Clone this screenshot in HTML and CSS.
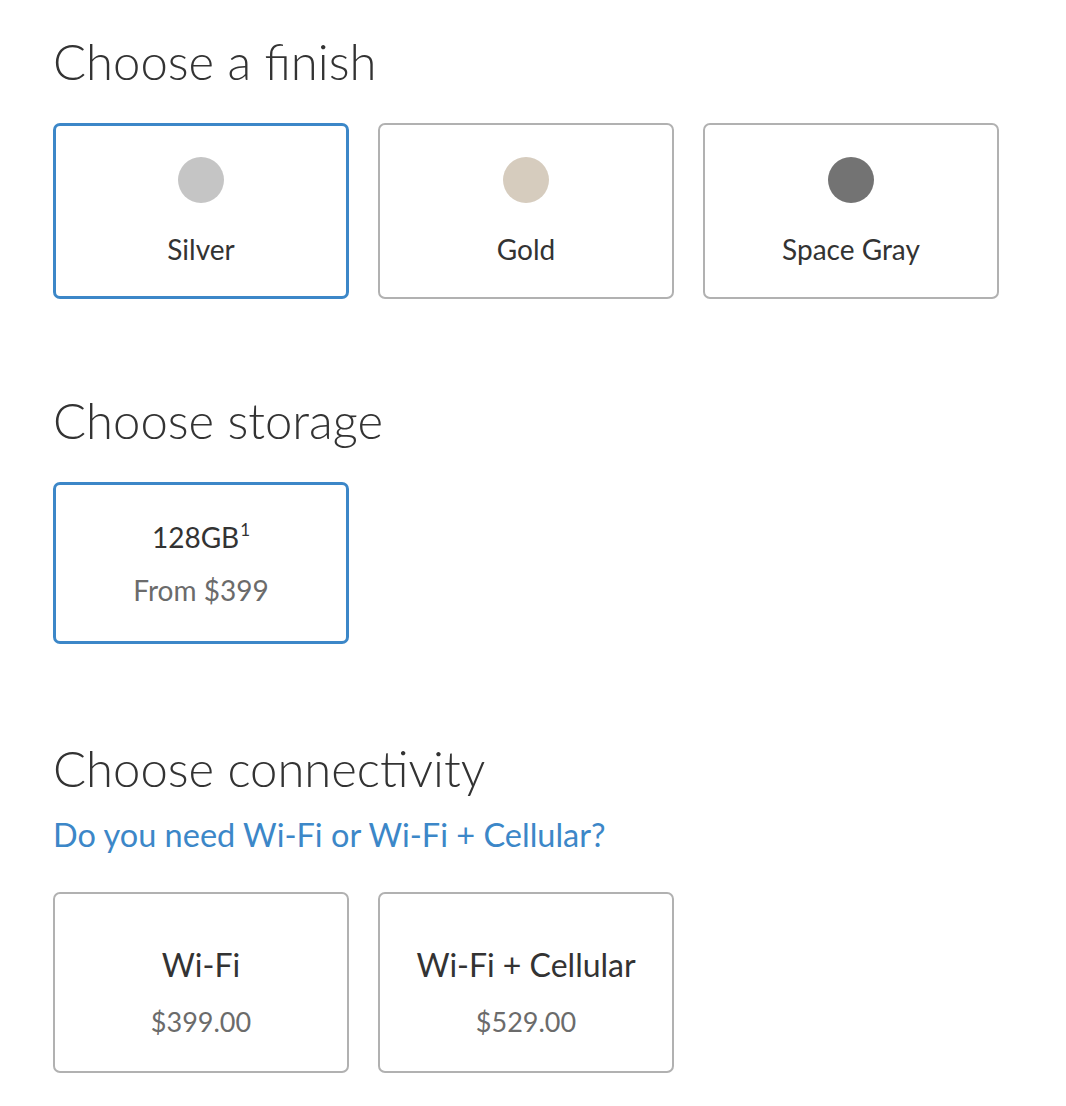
FILE: index.html
```html
<!DOCTYPE html>
<html lang="en">
<head>
  <meta charset="UTF-8">
  <title>Choose your iPad</title>
  <link rel="stylesheet" href="styles.css">
</head>
<body>
  <div class="config">
    <section class="step step-finish">
      <h2>Choose a finish</h2>
      <div class="options">
        <div class="option selected">
          <span class="swatch silver"></span>
          <span class="name">Silver</span>
        </div>
        <div class="option">
          <span class="swatch gold"></span>
          <span class="name">Gold</span>
        </div>
        <div class="option">
          <span class="swatch space-gray"></span>
          <span class="name">Space Gray</span>
        </div>
      </div>
    </section>

    <section class="step step-storage">
      <h2>Choose storage</h2>
      <div class="options">
        <div class="option option-storage selected">
          <span class="capacity">128GB<sup>1</sup></span>
          <span class="price">From $399</span>
        </div>
      </div>
    </section>

    <section class="step step-connectivity">
      <h2>Choose connectivity</h2>
      <a class="help-link" href="#">Do you need Wi-Fi or Wi-Fi + Cellular?</a>
      <div class="options">
        <div class="option option-conn">
          <span class="conn-name">Wi-Fi</span>
          <span class="price">$399.00</span>
        </div>
        <div class="option option-conn">
          <span class="conn-name">Wi-Fi + Cellular</span>
          <span class="price">$529.00</span>
        </div>
      </div>
    </section>
  </div>
</body>
</html>
```

FILE: styles.css
```css
body {
  margin: 0;
  background: #fff;
  color: #333;
  font-family: Lato, "Open Sans", "Liberation Sans", sans-serif;
}

.config {
  padding: 33px 0 0 53px;
}

h2 {
  margin: 0;
  font-size: 49px;
  font-weight: 300;
  line-height: 56px;
  color: #333;
}

.step-storage h2 {
  margin-top: 93px;
}

.step-connectivity h2 {
  margin-top: 96px;
}

.options {
  display: flex;
  gap: 29px;
  margin-top: 34px;
}

.option {
  box-sizing: border-box;
  width: 296px;
  height: 176px;
  border: 2px solid #b1b1b1;
  border-radius: 7px;
  display: flex;
  flex-direction: column;
  align-items: center;
  justify-content: center;
  gap: 30px;
}

.option.selected {
  border: 3px solid #3c87c8;
}

.swatch {
  width: 46px;
  height: 46px;
  border-radius: 50%;
}

.silver { background: #c5c5c5; }
.gold { background: #d6ccbe; }
.space-gray { background: #737373; }

.name {
  font-size: 28px;
  line-height: 32px;
}

.option-storage {
  height: 162px;
  gap: 20px;
}

.capacity {
  font-size: 28px;
  line-height: 34px;
}

.capacity sup {
  font-size: 17px;
  line-height: 0;
  vertical-align: 12px;
  margin-left: 1px;
}

.price {
  font-size: 27px;
  line-height: 32px;
  color: #6b6b6b;
}

.option-storage .price {
  font-size: 28px;
}

.help-link {
  display: block;
  margin-top: 20px;
  font-size: 32.5px;
  line-height: 38px;
  color: #3c87c8;
  text-decoration: none;
}

.step-connectivity .options {
  margin-top: 38px;
}

.option-conn {
  height: 181px;
  gap: 22px;
  padding-top: 19px;
}

.conn-name {
  font-size: 32px;
  line-height: 38px;
}
```
